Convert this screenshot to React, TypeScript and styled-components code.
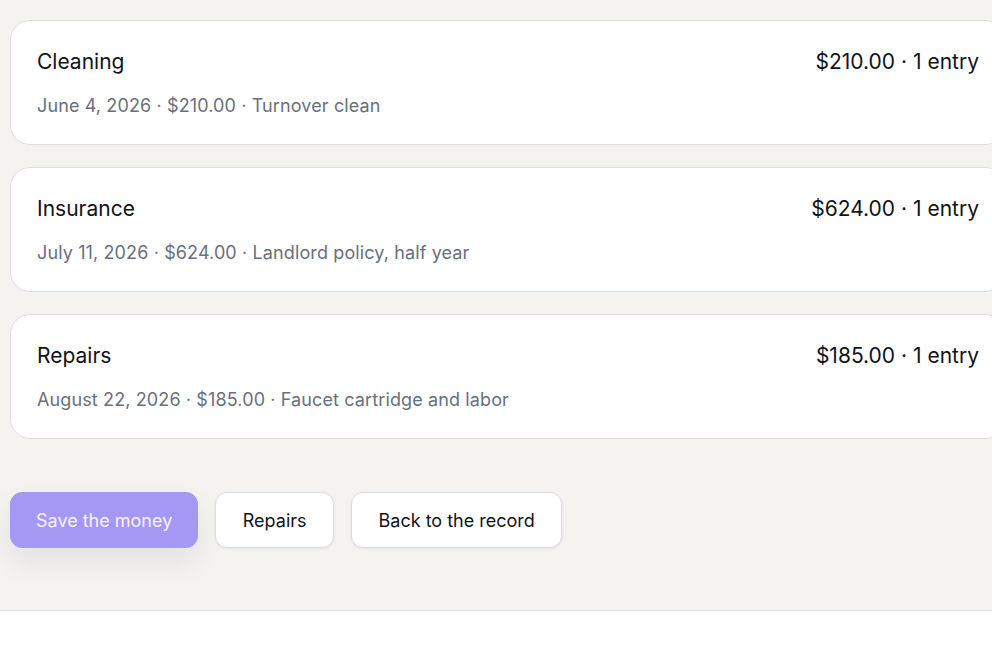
import styled, { createGlobalStyle } from 'styled-components'

interface Expense {
  category: string
  date: string
  amount: string
  note: string
  entries: number
}

const expenses: Expense[] = [
  { category: 'Cleaning', date: 'June 4, 2026', amount: '$210.00', note: 'Turnover clean', entries: 1 },
  { category: 'Insurance', date: 'July 11, 2026', amount: '$624.00', note: 'Landlord policy, half year', entries: 1 },
  { category: 'Repairs', date: 'August 22, 2026', amount: '$185.00', note: 'Faucet cartridge and labor', entries: 1 },
]

const GlobalStyle = createGlobalStyle`
  html, body {
    margin: 0;
    padding: 0;
    background: #ffffff;
    overflow: hidden;
  }

  body {
    font-family: Inter, 'Noto Sans', 'Liberation Sans', sans-serif;
    color: #111318;
  }
`

export default function App() {
  return (
    <>
      <GlobalStyle />
      <Page>
        <CategoryList>
          {expenses.map((expense) => (
            <CategoryCard key={expense.category}>
              <CardHeader>
                <CategoryName>{expense.category}</CategoryName>
                <CategoryTotal>
                  {expense.amount} · {expense.entries} {expense.entries === 1 ? 'entry' : 'entries'}
                </CategoryTotal>
              </CardHeader>
              <EntryLine>
                {expense.date} · {expense.amount} · {expense.note}
              </EntryLine>
            </CategoryCard>
          ))}
        </CategoryList>
        <Actions>
          <PrimaryButton type="button">Save the money</PrimaryButton>
          <SecondaryButton type="button">Repairs</SecondaryButton>
          <SecondaryButton type="button">Back to the record</SecondaryButton>
        </Actions>
      </Page>
      <Footer />
    </>
  )
}

const Page = styled.main`
  background: #f4f3ef;
  padding: 20px 0 62px 10px;
  border-bottom: 1px solid #e2e2e4;
  overflow: hidden;
`

const CategoryList = styled.div`
  display: flex;
  flex-direction: column;
  gap: 22px;
  width: 996px;
`

const CategoryCard = styled.section`
  background: #ffffff;
  border: 1px solid #dcdde1;
  border-radius: 20px;
  padding: 27px 26px 26px 26px;
  display: flex;
  flex-direction: column;
  gap: 18px;
`

const CardHeader = styled.div`
  display: flex;
  justify-content: space-between;
  align-items: center;
`

const CategoryName = styled.h3`
  margin: 0;
  font-size: 21px;
  font-weight: 400;
  line-height: 28px;
  color: #111318;
`

const CategoryTotal = styled.span`
  font-size: 21px;
  line-height: 28px;
  color: #111318;
`

const EntryLine = styled.p`
  margin: 0;
  font-size: 18px;
  line-height: 24px;
  letter-spacing: 0.12px;
  color: #6a6f7c;
`

const Actions = styled.div`
  display: flex;
  gap: 17px;
  margin-top: 53px;
`

const BaseButton = styled.button`
  height: 56px;
  padding: 0 26.5px;
  border-radius: 12px;
  font-family: inherit;
  font-size: 18px;
  cursor: pointer;
`

const PrimaryButton = styled(BaseButton)`
  padding: 0 25px;
  background: #a597f4;
  border: 1px solid #a597f4;
  color: #f6f3ff;
  box-shadow: 0 14px 24px rgba(120, 110, 160, 0.12);
`

const SecondaryButton = styled(BaseButton)`
  background: #ffffff;
  border: 1px solid #dcdde1;
  color: #111318;
  box-shadow: 0 1px 3px rgba(0, 0, 0, 0.08);
`

const Footer = styled.footer`
  height: 60px;
  background: #ffffff;
`
